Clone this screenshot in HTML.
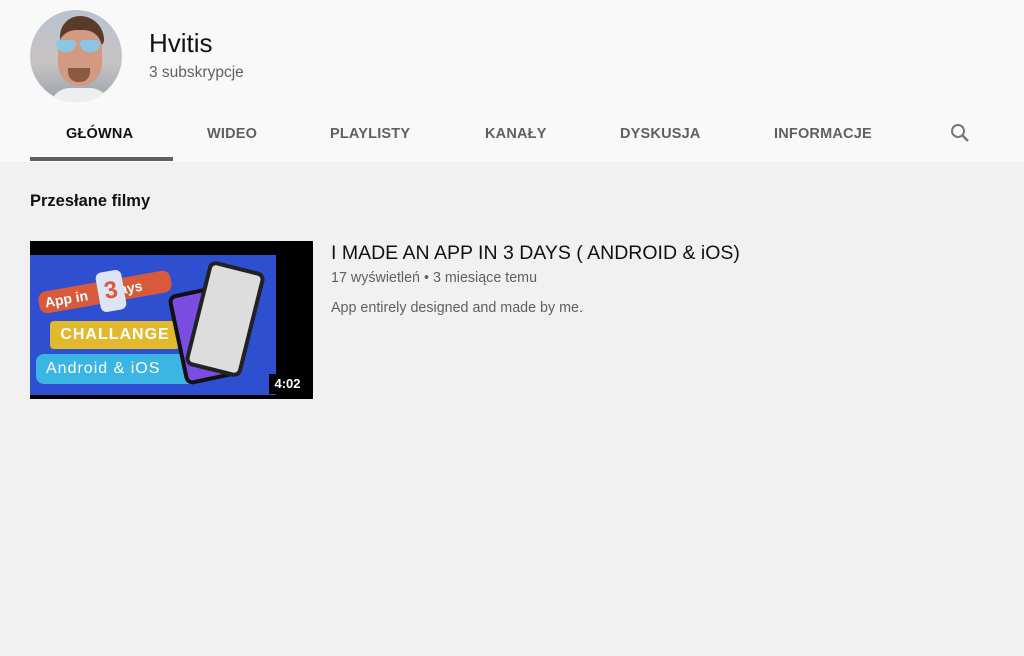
<!DOCTYPE html>
<html><head><meta charset="utf-8"><style>
*{margin:0;padding:0;box-sizing:border-box}
body{width:1024px;height:656px;background:#f1f1f1;font-family:"Liberation Sans",sans-serif;position:relative;overflow:hidden}
.hdr{position:absolute;left:0;top:0;width:1024px;height:162px;background:#f9f9f9}
.av{position:absolute;left:30px;top:10px;width:92px;height:92px;border-radius:50%;overflow:hidden;background:linear-gradient(180deg,#b8c2cf 0%,#c9c4c4 55%,#9aa4ad 100%)}
.t{position:absolute;white-space:nowrap}
.tab{position:absolute;top:126px;font-size:14.5px;font-weight:bold;color:#606060;letter-spacing:.2px}
</style></head><body>
<div class="hdr">
<div class="av">
<div style="position:absolute;left:30px;top:6px;width:44px;height:30px;background:#5a3a28;border-radius:20px 24px 6px 6px"></div>
<div style="position:absolute;left:28px;top:20px;width:44px;height:56px;background:#d39a82;border-radius:18px 18px 22px 22px"></div>
<div style="position:absolute;left:26px;top:30px;width:20px;height:12px;background:#8cc6e6;border-radius:4px 4px 10px 10px"></div>
<div style="position:absolute;left:50px;top:30px;width:20px;height:12px;background:#8cc6e6;border-radius:4px 4px 10px 10px"></div>
<div style="position:absolute;left:38px;top:58px;width:22px;height:14px;background:#8a5a40;border-radius:0 0 10px 10px"></div>
<div style="position:absolute;left:20px;top:78px;width:60px;height:20px;background:#eee;border-radius:20px 20px 0 0"></div>
</div>
<div class="t" style="left:149px;top:28px;font-size:26px;color:#111">Hvitis</div>
<div class="t" style="left:149px;top:64px;font-size:15.5px;color:#606060">3 subskrypcje</div>
<div class="tab" style="left:66px;color:#111">GŁÓWNA</div>
<div class="tab" style="left:207px">WIDEO</div>
<div class="tab" style="left:330px">PLAYLISTY</div>
<div class="tab" style="left:485px">KANAŁY</div>
<div class="tab" style="left:620px">DYSKUSJA</div>
<div class="tab" style="left:774px">INFORMACJE</div>
<svg style="position:absolute;left:948px;top:121px" width="24" height="24" viewBox="0 0 24 24"><circle cx="10" cy="10" r="6" fill="none" stroke="#777" stroke-width="2"/><path d="M14.5 14.5L20 20" stroke="#777" stroke-width="2.4"/></svg>
<div style="position:absolute;left:30px;top:157px;width:143px;height:4px;background:#606060"></div>
</div>
<div class="t" style="left:30px;top:192px;font-size:16.5px;font-weight:bold;color:#111">Przesłane filmy</div>
<div style="position:absolute;left:30px;top:241px;width:283px;height:158px;background:#000;overflow:hidden">
<div style="position:absolute;left:0;top:14px;width:246px;height:140px;background:#2d4fd0"></div>
<div style="position:absolute;left:8px;top:40px;width:134px;height:22px;background:#d85a3a;border-radius:8px;transform:rotate(-10deg);color:#fff;font-size:14px;font-weight:bold;padding-left:6px;line-height:22px">App in &nbsp;&nbsp;&nbsp;&nbsp;&nbsp;days</div>
<div style="position:absolute;left:68px;top:30px;width:26px;height:40px;background:#dce4f5;border-radius:6px;transform:rotate(-10deg);color:#d85a3a;font-size:24px;font-weight:bold;text-align:center;line-height:40px">3</div>
<div style="position:absolute;left:20px;top:80px;width:130px;height:28px;background:#e2b92c;border-radius:4px;color:#fff;font-size:16px;font-weight:bold;text-align:center;line-height:28px;letter-spacing:1px">CHALLANGE</div>
<div style="position:absolute;left:6px;top:113px;width:160px;height:30px;background:#3bb6e4;border-radius:8px;color:#fff;font-size:16px;padding-left:10px;line-height:30px;letter-spacing:1px">Android &amp; iOS</div>
<div style="position:absolute;left:146px;top:48px;width:56px;height:92px;background:#7a4de0;border:4px solid #111;border-radius:8px;transform:rotate(-12deg)"></div>
<div style="position:absolute;left:166px;top:24px;width:58px;height:108px;background:#ddd;border:4px solid #222;border-radius:8px;transform:rotate(14deg)"></div>
<div style="position:absolute;left:239px;top:133px;width:37px;height:20px;background:#000;color:#fff;font-size:13px;font-weight:bold;line-height:20px;text-align:center">4:02</div>
</div>
<div class="t" style="left:331px;top:242px;font-size:19.5px;color:#111">I MADE AN APP IN 3 DAYS ( ANDROID &amp; iOS)</div>
<div class="t" style="left:331px;top:270px;font-size:14.3px;color:#606060">17 wyświetleń • 3 miesiące temu</div>
<div class="t" style="left:331px;top:300px;font-size:14.3px;color:#606060">App entirely designed and made by me.</div>
</body></html>
